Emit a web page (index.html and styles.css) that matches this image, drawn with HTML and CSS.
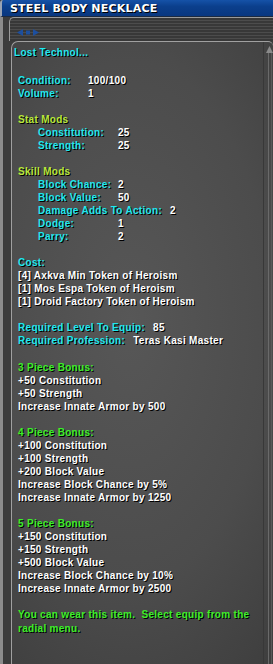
FILE: index.html
```html
<!DOCTYPE html>
<html>
<head>
<meta charset="utf-8">
<link rel="stylesheet" href="styles.css">
</head>
<body>
<div class="window">
  <div class="titlebar"><span class="title">STEEL BODY NECKLACE</span></div>
  <div class="frame">
    <div class="toolbar">
      <svg class="arrows" width="22" height="7" viewBox="0 0 22 7">
        <polygon points="0,3.5 6,0 6,7" fill="#1d4f9e"/>
        <rect x="9" y="1.5" width="4" height="4" fill="#1d4f9e"/>
        <polygon points="22,3.5 16,0 16,7" fill="#1d4f9e"/>
      </svg>
    </div>
    <div class="panel">
      <div class="content">
        <div class="name">Lost Technol...</div>
        <div class="body">
          <div class="row"><span class="lbl w70">Condition:</span><span class="val">100/100</span></div>
          <div class="row"><span class="lbl w70">Volume:</span><span class="val">1</span></div>
          <div class="blank"></div>
          <div class="row"><span class="head">Stat Mods</span></div>
          <div class="row ind"><span class="lbl w80">Constitution:</span><span class="val">25</span></div>
          <div class="row ind"><span class="lbl w80">Strength:</span><span class="val">25</span></div>
          <div class="blank"></div>
          <div class="row"><span class="head">Skill Mods</span></div>
          <div class="row ind"><span class="lbl w80">Block Chance:</span><span class="val">2</span></div>
          <div class="row ind"><span class="lbl w80">Block Value:</span><span class="val">50</span></div>
          <div class="row ind"><span class="lbl gap">Damage Adds To Action:</span><span class="val">2</span></div>
          <div class="row ind"><span class="lbl w80">Dodge:</span><span class="val">1</span></div>
          <div class="row ind"><span class="lbl w80">Parry:</span><span class="val">2</span></div>
          <div class="blank"></div>
          <div class="row"><span class="lbl">Cost:</span></div>
          <div class="row"><span class="val">[4] Axkva Min Token of Heroism</span></div>
          <div class="row"><span class="val">[1] Mos Espa Token of Heroism</span></div>
          <div class="row"><span class="val">[1] Droid Factory Token of Heroism</span></div>
          <div class="blank"></div>
          <div class="row"><span class="lbl gap">Required Level To Equip:</span><span class="val">85</span></div>
          <div class="row"><span class="lbl gap">Required Profession:</span><span class="val">Teras Kasi Master</span></div>
          <div class="blank"></div>
          <div class="row"><span class="bonus">3 Piece Bonus:</span></div>
          <div class="row"><span class="val">+50 Constitution</span></div>
          <div class="row"><span class="val">+50 Strength</span></div>
          <div class="row"><span class="val">Increase Innate Armor by 500</span></div>
          <div class="blank"></div>
          <div class="row"><span class="bonus">4 Piece Bonus:</span></div>
          <div class="row"><span class="val">+100 Constitution</span></div>
          <div class="row"><span class="val">+100 Strength</span></div>
          <div class="row"><span class="val">+200 Block Value</span></div>
          <div class="row"><span class="val">Increase Block Chance by 5%</span></div>
          <div class="row"><span class="val">Increase Innate Armor by 1250</span></div>
          <div class="blank"></div>
          <div class="row"><span class="bonus">5 Piece Bonus:</span></div>
          <div class="row"><span class="val">+150 Constitution</span></div>
          <div class="row"><span class="val">+150 Strength</span></div>
          <div class="row"><span class="val">+500 Block Value</span></div>
          <div class="row"><span class="val">Increase Block Chance by 10%</span></div>
          <div class="row"><span class="val">Increase Innate Armor by 2500</span></div>
          <div class="blank"></div>
          <p class="note">You can wear this item.&nbsp; Select equip from the radial menu.</p>
        </div>
      </div>
      <div class="scrollbar">
        <svg class="up" width="7" height="7" viewBox="0 0 7 7"><polygon points="3.5,0 7,7 0,7" fill="#8a8a8a"/></svg>
        <div class="track"></div>
      </div>
    </div>
  </div>
</div>
</body>
</html>
```

FILE: styles.css
```css
html, body {
  margin: 0;
  padding: 0;
  background: #3a3a3a;
}
.window {
  width: 273px;
  height: 664px;
  display: flex;
  flex-direction: column;
  overflow: hidden;
  font-family: "Liberation Sans", Arial, sans-serif;
}
.titlebar {
  height: 16px;
  flex: none;
  background: linear-gradient(#1552a8, #0b3f8c 40%, #093780);
  border-left: 2px solid #9aa4b4;
  border-bottom: 1px solid #1c2a40;
  border-top-left-radius: 3px;
  display: flex;
  align-items: center;
  padding-left: 8px;
}
.title {
  color: #fff;
  font-family: "DejaVu Sans", sans-serif;
  font-weight: bold;
  font-size: 11px;
  letter-spacing: 0.2px;
  text-shadow: 1px 1px 0 #000;
}
.frame {
  flex: 1;
  display: flex;
  flex-direction: column;
  border-left: 3px solid #8c8c8c;
  box-shadow: inset 1px 0 0 #3a3a3a;
  background: #3c3c3c;
  padding-left: 6px;
}
.toolbar {
  height: 23px;
  flex: none;
  border-top: 1px solid #9a9a9a;
  border-left: 1px solid #9a9a9a;
  border-top-left-radius: 5px;
  background: repeating-linear-gradient(#383838 0, #383838 2px, #4c4c4c 2px, #4c4c4c 3px);
  position: relative;
}
.arrows {
  position: absolute;
  left: 7px;
  top: 11px;
}
.panel {
  flex: 1;
  display: flex;
  margin-left: 2px;
  border-top: 1px solid #a0a0a0;
  border-left: 1px solid #a0a0a0;
  border-top-left-radius: 7px;
  border-top-right-radius: 5px;
  background: radial-gradient(ellipse 90% 70% at 45% 45%, #575757, #4c4c4c 60%, #3e3e3e);
}
.content {
  flex: 1;
  padding: 4px 0 0 2px;
  font-size: 10px;
  font-weight: bold;
  line-height: 13px;
  letter-spacing: 0.3px;
  text-shadow: 1px 1px 0 #000;
  color: #fff;
  white-space: nowrap;
}
.name {
  color: #20e8f0;
  margin-bottom: 15px;
}
.body {
  padding-left: 4px;
}
.row {
  display: flex;
  height: 13px;
}
.row:nth-child(3n) {
  height: 13.1px;
}
.blank {
  height: 13px;
}
.ind {
  padding-left: 20px;
}
.lbl { color: #20e8f0; }
.w70 { width: 70px; }
.w80 { width: 80px; }
.gap { margin-right: 8px; }
.val { color: #fff; }
.head { color: #b8e83c; }
.bonus { color: #3cef2a; }
.note {
  margin: 0;
  color: #3cef2a;
  white-space: normal;
  width: 245px;
  line-height: 14px;
}
.scrollbar {
  width: 11px;
  flex: none;
  display: flex;
  flex-direction: column;
  align-items: center;
  border-left: 1px solid #383838;
  padding-top: 4px;
}
.track {
  flex: 1;
  width: 2px;
  border-left: 1px solid #6a6a6a;
  border-right: 1px solid #5a5a5a;
}
.up { flex: none; }
```
